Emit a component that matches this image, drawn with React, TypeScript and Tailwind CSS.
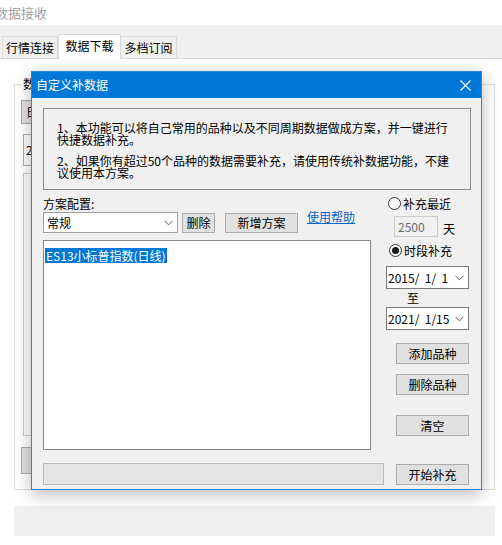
import React from "react";

function Chevron() {
  return (
    <svg width="9" height="6" viewBox="0 0 9 6" className="shrink-0">
      <polyline points="0.5,0.8 4.5,4.8 8.5,0.8" fill="none" stroke="#555" strokeWidth="1" />
    </svg>
  );
}

function Btn({ children, className = "" }: { children: React.ReactNode; className?: string }) {
  return (
    <div
      className={`flex items-center justify-center bg-[#e1e1e1] border border-[#adadad] text-[12px] leading-none text-black ${className}`}
    >
      {children}
    </div>
  );
}

function Radio({ checked }: { checked?: boolean }) {
  return (
    <div className="w-[13px] h-[13px] rounded-full border border-[#333333] bg-white flex items-center justify-center shrink-0">
      {checked ? <div className="w-[7px] h-[7px] rounded-full bg-[#1a1a1a]" /> : null}
    </div>
  );
}

export default function App() {
  return (
    <div className="relative w-[502px] h-[545px] overflow-hidden bg-white text-black font-['Noto_Sans_CJK_SC',sans-serif]">
      {/* window title */}
      <div className="h-[25px] flex items-center -ml-[5px] text-[13px] leading-none text-[#a0a0a0]">数据接收</div>

      {/* tab strip */}
      <div className="h-[34px] bg-[#f0f0f0] border-b border-[#d9d9d9] flex items-end pl-[2px]">
        <div className="h-[22px] w-[56px] border border-b-0 border-[#d9d9d9] bg-[#f0f0f0] flex items-center justify-center text-[12px] leading-none">
          行情连接
        </div>
        <div className="h-[25px] w-[63px] -mb-px border border-b-0 border-[#d9d9d9] bg-white flex items-center justify-center text-[12px] leading-none pb-[2px]">
          数据下载
        </div>
        <div className="h-[22px] w-[56px] border border-b-0 border-l-0 border-[#d9d9d9] bg-[#f0f0f0] flex items-center justify-center text-[12px] leading-none">
          多档订阅
        </div>
      </div>

      {/* background page content */}
      <div className="relative ml-[14px] mt-[25px] w-[481px] h-[406px] border border-[#dcdcdc] flex flex-col">
        <div className="absolute left-[7px] -top-[8px] bg-white px-[1px] text-[12px] leading-[14px]">数据</div>
        <Btn className="ml-[6px] mt-[15px] w-[60px] h-[24px] justify-start pl-[4px]">日线</Btn>
        <div className="ml-[8px] mt-[10px] w-[60px] h-[32px] border border-[#adadad] bg-white text-[12px] leading-[30px] pl-[2px]">2</div>
        <div className="ml-[8px] mt-[7px] w-[60px] h-[263px] border border-[#c8c8c8] bg-white" />
        <Btn className="ml-[6px] mt-[11px] w-[60px] h-[27px]">补</Btn>
      </div>
      <div className="ml-[14px] mt-[16px] w-[481px] h-[30px] bg-[#f0f0f0]" />

      {/* dialog */}
      <div className="absolute left-[31px] top-[71px] w-[451px] h-[419px] border border-[#2b84d4] bg-[#f0f0f0] flex flex-col shadow-[0_4px_16px_rgba(0,0,0,0.28)]">
        <div className="h-[26px] bg-[#0078d7] flex items-center justify-between pl-[4px] pr-[10px] shrink-0">
          <span className="text-[12px] leading-none text-white">自定义补数据</span>
          <svg width="11" height="11" viewBox="0 0 11 11">
            <line x1="0.5" y1="0.5" x2="10.5" y2="10.5" stroke="white" strokeWidth="1.1" />
            <line x1="10.5" y1="0.5" x2="0.5" y2="10.5" stroke="white" strokeWidth="1.1" />
          </svg>
        </div>

        <div className="flex-1 flex flex-col pl-[11px]">
          {/* info box */}
          <div className="mt-[10px] w-[428px] h-[82px] border border-[#8c8c8c] pl-[13px] pt-[13px] text-[12px] leading-[12px] whitespace-nowrap">
            <div>1、本功能可以将自己常用的品种以及不同周期数据做成方案，并一键进行</div>
            <div>快捷数据补充。</div>
            <div className="mt-[9px]">2、如果你有超过50个品种的数据需要补充，请使用传统补数据功能，不建</div>
            <div>议使用本方案。</div>
          </div>

          <div className="flex">
            {/* left column */}
            <div className="w-[341px] flex flex-col">
              <div className="mt-[6px] h-[16px] text-[12px] leading-[16px]">方案配置:</div>
              <div className="h-[21px] flex items-start">
                <div className="w-[135px] h-[21px] border border-[#a0a0a0] bg-white flex items-center justify-between pl-[3px] pr-[4px]">
                  <span className="text-[12px] leading-none">常规</span>
                  <Chevron />
                </div>
                <Btn className="ml-[4px] mt-[1px] w-[33px] h-[20px] border-[#3a3a3a]">删除</Btn>
                <Btn className="ml-[10px] mt-[1px] w-[73px] h-[20px]">新增方案</Btn>
                <span className="ml-[9px] -mt-[3px] text-[12px] leading-[16px] text-[#0066cc] underline">使用帮助</span>
              </div>
              <div className="mt-[7px] w-[328px] h-[210px] border border-[#828790] bg-white p-[1px]">
                <span className="inline-block bg-[#0078d7] text-white text-[12px] leading-[15px] px-[1px]">ES13小标普指数(日线)</span>
              </div>
              <div className="mt-[13px] w-[341px] h-[22px] bg-[#e6e6e6] border border-[#bcbcbc]" />
            </div>

            {/* right column */}
            <div className="ml-[2px] w-[83px] flex flex-col">
              <div className="mt-[6px] h-[15px] ml-[2px] flex items-center">
                <Radio />
                <span className="ml-[2px] text-[12px] leading-none">补充最近</span>
              </div>
              <div className="mt-[5px] flex items-start">
                <div className="ml-[8px] w-[44px] h-[21px] border border-[#cccccc] bg-[#f0f0f0] text-[12px] leading-[19px] text-[#6d6d6d] pl-[3px]">
                  2500
                </div>
                <span className="ml-[5px] mt-[6px] text-[12px] leading-[14px]">天</span>
              </div>
              <div className="mt-[6px] h-[15px] ml-[3px] flex items-center">
                <Radio checked />
                <span className="ml-[2px] text-[12px] leading-none">时段补充</span>
              </div>
              <div className="mt-[8px] h-[23px] w-[83px] border border-[#7a7a7a] bg-white flex items-center justify-between pl-[1px] pr-[4px]">
                <span className="text-[12px] leading-none whitespace-pre">2015/  1/  1</span>
                <Chevron />
              </div>
              <div className="h-[18px] flex items-center pl-[21px] text-[12px] leading-none">至</div>
              <div className="h-[23px] w-[83px] border border-[#7a7a7a] bg-white flex items-center justify-between pl-[1px] pr-[4px]">
                <span className="text-[12px] leading-none whitespace-pre">2021/  1/15</span>
                <Chevron />
              </div>
              <Btn className="ml-[10px] mt-[13px] w-[73px] h-[21px]">添加品种</Btn>
              <Btn className="ml-[10px] mt-[10px] w-[73px] h-[21px]">删除品种</Btn>
              <Btn className="ml-[10px] mt-[20px] w-[73px] h-[21px]">清空</Btn>
              <Btn className="ml-[10px] mt-[28px] w-[73px] h-[21px]">开始补充</Btn>
            </div>
          </div>
        </div>
      </div>
    </div>
  );
}
